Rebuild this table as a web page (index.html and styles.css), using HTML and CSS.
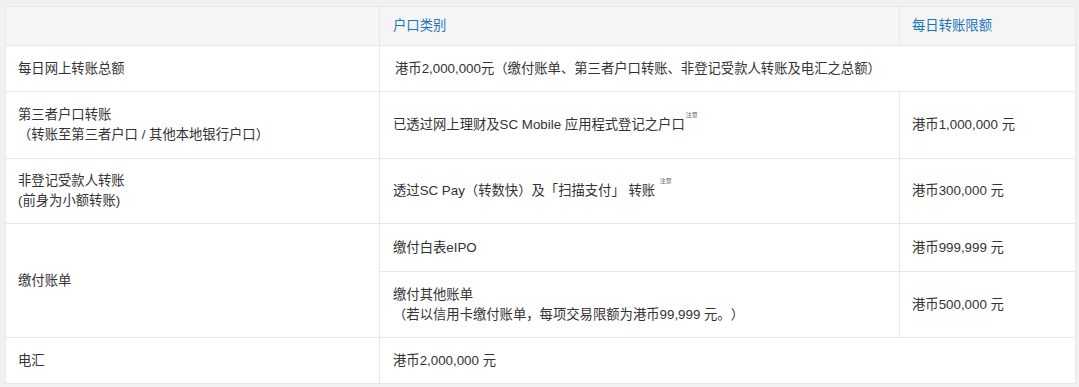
FILE: index.html
```html
<!DOCTYPE html>
<html lang="zh-CN">
<head>
<meta charset="utf-8">
<title>每日转账限额</title>
<link rel="stylesheet" href="styles.css">
</head>
<body>
<table class="limits">
  <colgroup>
    <col class="c1">
    <col class="c2">
    <col class="c3">
  </colgroup>
  <thead>
    <tr class="r-head">
      <th></th>
      <th class="mid">户口类别</th>
      <th>每日转账限额</th>
    </tr>
  </thead>
  <tbody>
    <tr class="r-46">
      <td>每日网上转账总额</td>
      <td class="mid wide" colspan="2">港币2,000,000元（缴付账单、第三者户口转账、非登记受款人转账及电汇之总额）</td>
    </tr>
    <tr class="r-67">
      <td>第三者户口转账<br>（转账至第三者户口 / 其他本地银行户口）</td>
      <td class="mid">已透过网上理财及SC Mobile 应用程式登记之户口<span class="note">注意</span></td>
      <td>港币1,000,000 元</td>
    </tr>
    <tr class="r-65">
      <td>非登记受款人转账<br>(前身为小额转账)</td>
      <td class="mid">透过SC Pay（转数快）及「扫描支付」 转账 <span class="note">注意</span></td>
      <td>港币300,000 元</td>
    </tr>
    <tr class="r-48">
      <td rowspan="2">缴付账单</td>
      <td class="mid">缴付白表eIPO</td>
      <td>港币999,999 元</td>
    </tr>
    <tr class="r-66">
      <td class="mid">缴付其他账单<br>（若以信用卡缴付账单，每项交易限额为港币99,999 元。）</td>
      <td>港币500,000 元</td>
    </tr>
    <tr class="r-46">
      <td>电汇</td>
      <td class="mid" colspan="2">港币2,000,000 元</td>
    </tr>
  </tbody>
</table>
</body>
</html>
```
FILE: styles.css
```css
html, body {
  margin: 0;
  background: #f1f1f1;
}
body {
  padding: 6px 0 0 5px;
  height: 387px;
  box-sizing: border-box;
  font-family: "Liberation Sans", "Noto Sans CJK SC", sans-serif;
  font-size: 13.333px;
  line-height: 20px;
  color: #333333;
  text-spacing-trim: space-all;
}
.limits {
  width: 1071px;
  table-layout: fixed;
  border-collapse: separate;
  border-spacing: 0;
  background: #ffffff;
  border-top: 1px solid #e8e8e8;
  border-left: 1px solid #e8e8e8;
}
.c1 { width: 374px; }
.c2 { width: 520px; }
.c3 { width: 176px; }
.limits th,
.limits td {
  padding: 0 12px;
  text-align: left;
  vertical-align: middle;
  font-weight: normal;
  border-right: 1px solid #e8e8e8;
  border-bottom: 1px solid #e8e8e8;
  white-space: nowrap;
}
.limits th {
  background: #f5f5f5;
  color: #1a74bf;
}
.limits .mid { padding-left: 13px; }
.limits .wide { padding-left: 15px; }
.r-head { height: 39px; }
.r-46 { height: 46px; }
.r-67 { height: 67px; }
.r-65 { height: 65px; }
.r-48 { height: 48px; }
.r-66 { height: 66px; }
.note {
  font-size: 6px;
  line-height: 0;
  color: #666666;
  vertical-align: 12px;
  margin-left: 1px;
}
```
